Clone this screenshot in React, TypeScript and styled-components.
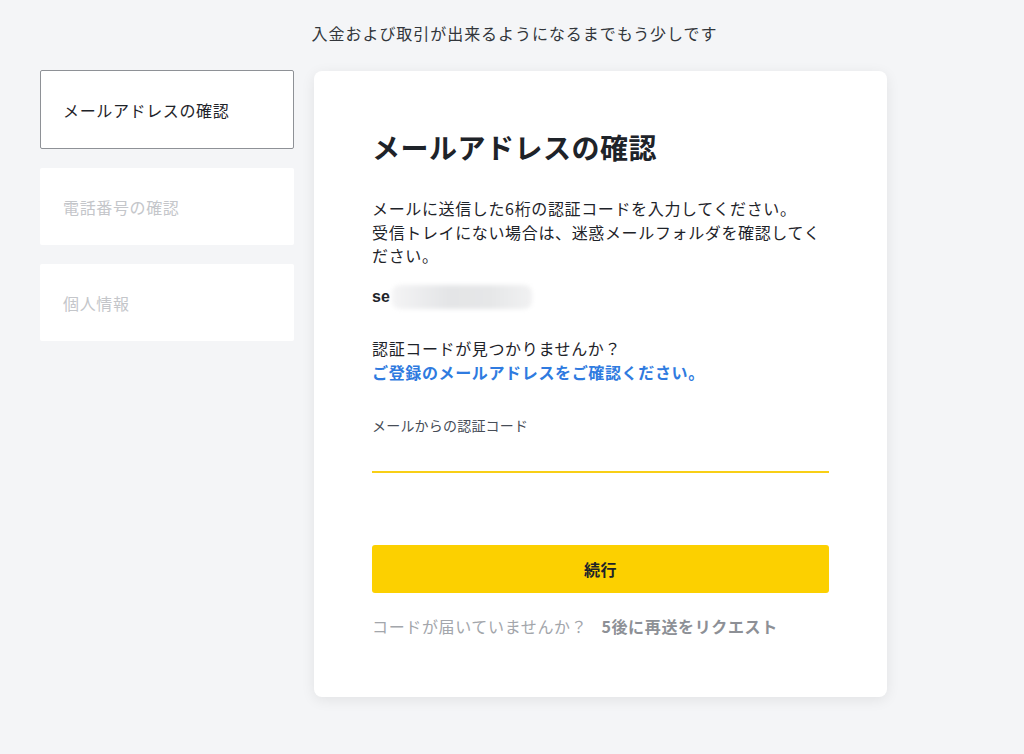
import * as React from 'react';
import styled, { createGlobalStyle } from 'styled-components';

const GlobalStyle = createGlobalStyle`
  html, body {
    margin: 0;
    padding: 0;
    background: #f4f5f7;
    font-family: "Noto Sans CJK JP", "Noto Sans", "Liberation Sans", sans-serif;
    color: #1e2329;
    letter-spacing: 0.04em;
  }
`;

const Page = styled.div`
  min-height: 754px;
  box-sizing: border-box;
  padding: 22px 0 40px 40px;
`;

const Notice = styled.div`
  width: 949px;
  text-align: center;
  font-size: 16px;
  letter-spacing: 0.95px;
  line-height: 22px;
  color: #32363b;
  margin-bottom: 26px;
`;

const Layout = styled.div`
  display: flex;
  align-items: flex-start;
  gap: 20px;
`;

const Steps = styled.div`
  width: 254px;
  display: flex;
  flex-direction: column;
  gap: 19px;
`;

const Step = styled.div<{ $active?: boolean }>`
  height: 77px;
  box-sizing: border-box;
  display: flex;
  align-items: center;
  padding-left: 22px;
  background: #fff;
  border-radius: 2px;
  border: 1px solid ${p => (p.$active ? '#8e9196' : 'transparent')};
  font-size: 16px;
  color: ${p => (p.$active ? '#1e2329' : '#c4c6ca')};
  &:first-child {
    height: 79px;
  }
`;

const Card = styled.div`
  width: 573px;
  box-sizing: border-box;
  background: #fff;
  border-radius: 8px;
  box-shadow: 0 3px 14px rgba(0, 0, 0, 0.08);
  padding: 56px 58px 0 58px;
  height: 626px;
  margin-top: 1px;
`;

const Title = styled.h1`
  margin: 0 0 30px;
  font-size: 28px;
  letter-spacing: 0.5px;
  line-height: 40px;
  font-weight: 700;
  color: #1e2329;
`;

const Text = styled.p`
  margin: 0;
  font-size: 16px;
  line-height: 23.5px;
  color: #1e2329;
`;

const Email = styled.div`
  display: flex;
  align-items: center;
  margin-top: 16px;
  height: 26px;
  font-size: 16px;
  font-weight: 700;
  letter-spacing: 0;
  font-family: "Liberation Sans", "Noto Sans", sans-serif;
`;

const Blur = styled.div`
  width: 140px;
  height: 24px;
  margin-left: 2px;
  border-radius: 8px;
  background: linear-gradient(90deg, #f4f4f5 0%, #e4e5e7 40%, #e6e7e8 70%, #f1f1f2 100%);
  filter: blur(2px);
`;

const Help = styled.div`
  margin-top: 27px;
`;

const Link = styled.a`
  display: block;
  font-size: 16px;
  line-height: 25px;
  font-weight: 700;
  color: #2f7be0;
  text-decoration: none;
`;

const Label = styled.div`
  margin-top: 30px;
  font-size: 14px;
  line-height: 20px;
  letter-spacing: 0.2px;
  color: #474d57;
`;

const Input = styled.input`
  display: block;
  width: 100%;
  box-sizing: border-box;
  height: 32px;
  margin-top: 6px;
  border: none;
  border-bottom: 2px solid #f8cf16;
  outline: none;
  font-size: 16px;
  background: transparent;
`;

const Button = styled.button`
  display: block;
  width: 100%;
  height: 48px;
  margin-top: 72px;
  border: none;
  border-radius: 3px;
  background: #fcd000;
  font-family: inherit;
  font-size: 16px;
  font-weight: 700;
  letter-spacing: 0.5px;
  color: #1e2329;
`;

const Resend = styled.div`
  margin-top: 22px;
  font-size: 16px;
  line-height: 22px;
  color: #a3a6ab;
`;

const ResendAction = styled.span`
  margin-left: 14px;
  font-weight: 700;
  color: #8d9096;
`;

export default function App() {
  return (
    <>
      <GlobalStyle />
      <Page>
        <Notice>入金および取引が出来るようになるまでもう少しです</Notice>
        <Layout>
          <Steps>
            <Step $active>メールアドレスの確認</Step>
            <Step>電話番号の確認</Step>
            <Step>個人情報</Step>
          </Steps>
          <Card>
            <Title>メールアドレスの確認</Title>
            <Text>
              メールに送信した6桁の認証コードを入力してください。
              <br />
              受信トレイにない場合は、迷惑メールフォルダを確認してください。
            </Text>
            <Email>
              se
              <Blur />
            </Email>
            <Help>
              <Text>認証コードが見つかりませんか？</Text>
              <Link href="#">ご登録のメールアドレスをご確認ください。</Link>
            </Help>
            <Label>メールからの認証コード</Label>
            <Input />
            <Button>続行</Button>
            <Resend>
              コードが届いていませんか？
              <ResendAction>5後に再送をリクエスト</ResendAction>
            </Resend>
          </Card>
        </Layout>
      </Page>
    </>
  );
}
